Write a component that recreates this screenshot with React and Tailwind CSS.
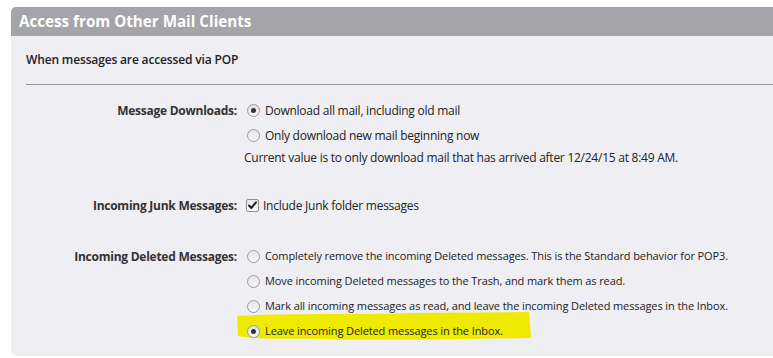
import React from "react";

const font = { fontFamily: '"Open Sans", "Noto Sans", sans-serif' };

function Radio({ checked }) {
  return (
    <span className="relative inline-flex h-[13px] w-[13px] shrink-0 items-center justify-center rounded-full border border-[#9a9a9a] bg-gradient-to-b from-[#e4e4e4] to-[#f8f8f8]">
      {checked && <span className="h-[5px] w-[5px] rounded-full bg-[#333]" />}
    </span>
  );
}

function Checkbox() {
  return (
    <span className="inline-flex h-[13px] w-[13px] shrink-0 items-center justify-center rounded-[2px] border border-[#8f8f8f] bg-gradient-to-b from-[#e6e6e6] to-[#fafafa]">
      <svg width="11" height="11" viewBox="0 0 11 11">
        <path d="M2 5.5 L4.3 8 L9 2.3" fill="none" stroke="#222" strokeWidth="2" strokeLinecap="round" strokeLinejoin="round" />
      </svg>
    </span>
  );
}

function Option({ checked, children, highlight, small }) {
  return (
    <div className={"relative flex h-[25px] items-center gap-[5px] whitespace-nowrap " + (small ? "text-[11px] tracking-[-0.1px]" : "")}>
      {highlight && (
        <svg className="absolute left-[-11px] top-[-7px]" width="296" height="30" viewBox="0 0 296 30">
          <path d="M1 4 C40 1 120 3 180 1 L293 0 L295 26 C230 27 150 29 90 27 C60 26 20 28 2 24 Z" fill="#eeea00" />
        </svg>
      )}
      <span className="relative flex items-center gap-[5px]">
        <Radio checked={checked} />
        <span>{children}</span>
      </span>
    </div>
  );
}

export default function App() {
  return (
    <div className="h-[358px] w-[773px] overflow-hidden bg-white pl-[11px] pt-[7px] text-[12px] text-[#222]" style={font}>
      <div className="h-[349px] w-[780px] overflow-hidden rounded-l-[5px] bg-[#efeef3]">
        <div className="flex h-[29px] items-center whitespace-nowrap bg-[#a5a4a8] pl-[8px] text-[15.2px] font-bold text-white">
          Access from Other Mail Clients
        </div>
        <div className="pl-[15px]">
          <div className="flex h-[48px] items-center whitespace-nowrap text-[12px] font-semibold tracking-[-0.15px] text-[#222]">
            When messages are accessed via POP
          </div>
          <div className="h-px bg-[#9b9b9b]" />
        </div>
        <div className="mt-[13px] grid grid-cols-[226px_1fr] gap-x-[10px] tracking-[-0.25px]">
          <div className="flex h-[25px] items-center justify-end whitespace-nowrap font-bold text-[#333]">Message Downloads:</div>
          <div>
            <Option checked>Download all mail, including old mail</Option>
            <Option>Only download new mail beginning now</Option>
            <div className="flex h-[20px] items-center whitespace-nowrap">
              <span className="-ml-[3px]">Current value is to only download mail that has arrived after 12/24/15 at 8:49 AM.</span>
            </div>
          </div>

          <div className="mt-[25px] flex h-[25px] items-center justify-end whitespace-nowrap font-bold text-[#333]">Incoming Junk Messages:</div>
          <div className="mt-[25px] flex h-[25px] items-center gap-[4px] whitespace-nowrap">
            <span className="-ml-[1px] flex"><Checkbox /></span>
            <span>Include Junk folder messages</span>
          </div>

          <div className="mt-[26px] flex h-[25px] items-center justify-end whitespace-nowrap font-bold text-[#333]">Incoming Deleted Messages:</div>
          <div className="mt-[26px]">
            <Option small>Completely remove the incoming Deleted messages. This is the Standard behavior for POP3.</Option>
            <Option small>Move incoming Deleted messages to the Trash, and mark them as read.</Option>
            <Option small>Mark all incoming messages as read, and leave the incoming Deleted messages in the Inbox.</Option>
            <Option small checked highlight>Leave incoming Deleted messages in the Inbox.</Option>
          </div>
        </div>
      </div>
    </div>
  );
}
